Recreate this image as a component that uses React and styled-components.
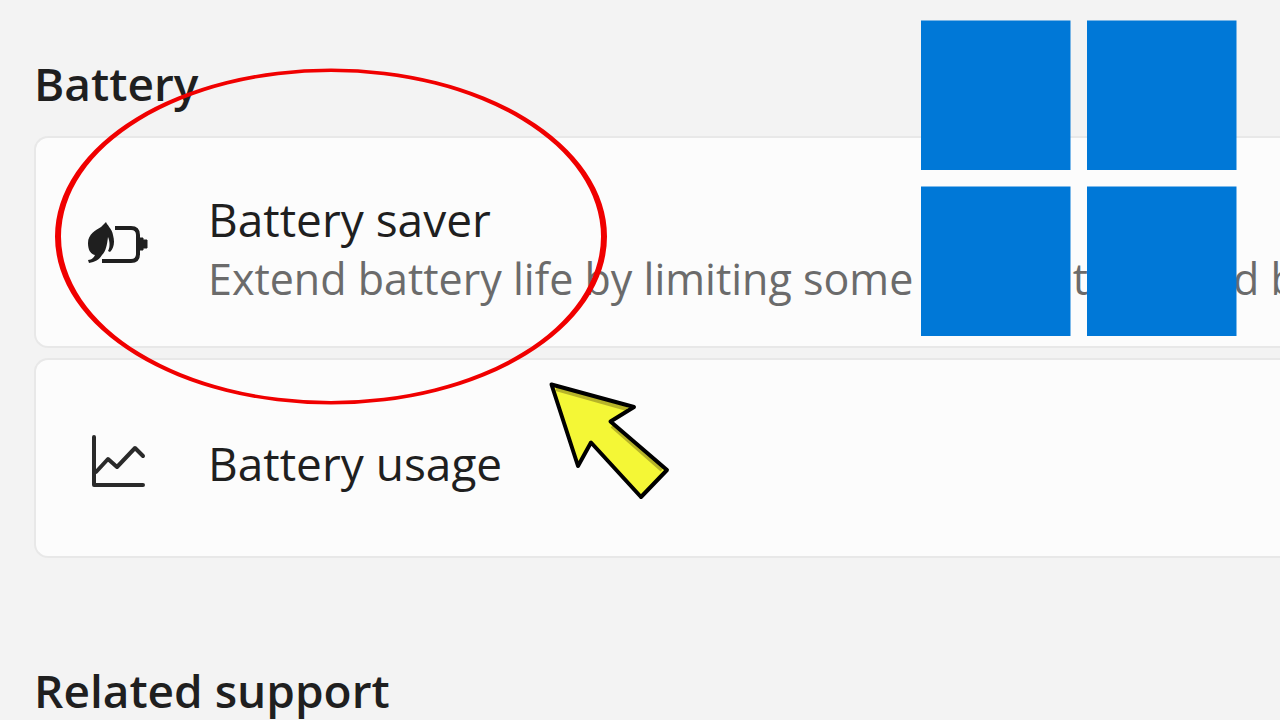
import React from 'react'
import styled, { createGlobalStyle } from 'styled-components'

const GlobalStyle = createGlobalStyle`
    * {
        box-sizing: border-box;
    }
    body {
        margin: 0;
        background: #f3f3f3;
        overflow: hidden;
        font-family: "Open Sans", "Noto Sans", sans-serif;
        color: #1f1f1f;
    }
`;
const Page = styled.main`
    position: relative;
    min-height: 100vh;
    padding: 51px 0 0 34px;
    overflow: hidden;
`;
const Heading = styled.h2`
    margin: 0;
    font-size: 46px;
    line-height: 64px;
    font-weight: 600;
`;
const CardList = styled.div`
    display: flex;
    flex-direction: column;
    gap: 10px;
    margin: 21px 0 100px;
`;
// Runs past the right side of the window, so only the left corners are round.
const Card = styled.button`
    display: flex;
    align-items: center;
    gap: 60px;
    width: 100%;
    padding: ${({ $tall }) => ($tall ? "50px 0 38px 52px" : "72px 0 62px 52px")};
    border: 2px solid #e8e8e8;
    border-right: none;
    border-radius: 14px 0 0 14px;
    background: #fcfcfc;
    color: inherit;
    font-family: inherit;
    text-align: left;
    white-space: nowrap;
    overflow: hidden;
`;
const CardIcon = styled.svg`
    flex: none;
    width: 60px;
    height: 60px;
`;
const CardText = styled.span`
    display: flex;
    flex-direction: column;
`;
const Title = styled.span`
    font-size: 46px;
    line-height: 62px;
`;
const Description = styled.span`
    font-size: 43px;
    line-height: 58px;
    color: #6b6b6b;
`;
const WindowsLogo = styled.svg`
    position: absolute;
    top: 20px;
    right: 43px;
    width: 317px;
    height: 317px;
`;
const Ring = styled.svg`
    position: absolute;
    top: 68px;
    left: 54px;
    width: 554px;
    height: 338px;
    pointer-events: none;
`;
const Pointer = styled.svg`
    position: absolute;
    top: 376px;
    left: 544px;
    width: 130px;
    height: 130px;
    pointer-events: none;
`;

const BatterySaverIcon = () => (
    <CardIcon viewBox="88 218 60 60" aria-hidden="true">
        <path
            d="M106 222 C107 225 112 229 113 235 C115 242 114 248 110 252 L108 251 C110 247 110 242 108 237 C107 245 106 251 102 255 C99 260 95 262 89 263 L88 260 C92 260 94 257 95 255 C90 254 88 249 88 243 C88 234 96 230 101 227 Z"
            fill="#1f1f1f"
        />
        <path d="M115 228 H131 Q138 228 138 235 V254 Q138 261 131 261 H102" fill="none" stroke="#1f1f1f" strokeWidth="4" />
        <path d="M139 238 H143 V240 H147 V248 H143 V250 H139 Z" fill="#1f1f1f" stroke="#1f1f1f" strokeWidth="1" strokeLinejoin="round" />
    </CardIcon>
)

const BatteryUsageIcon = () => (
    <CardIcon viewBox="88 433 60 60" aria-hidden="true">
        <path
            d="M94 437 V485 H143 M96 472 L108 459 L117 467 L135 448 L143 456"
            fill="none"
            stroke="#2a2a2a"
            strokeWidth="4"
            strokeLinecap="round"
            strokeLinejoin="round"
        />
    </CardIcon>
)

const App = () => {
  return (
    <>
        <GlobalStyle />
        <Page>
            <Heading>Battery</Heading>
            <CardList>
                <Card type="button" $tall>
                    <BatterySaverIcon />
                    <CardText>
                        <Title>Battery saver</Title>
                        <Description>Extend battery life by limiting some notifications and background activity</Description>
                    </CardText>
                </Card>
                <Card type="button">
                    <BatteryUsageIcon />
                    <CardText>
                        <Title>Battery usage</Title>
                    </CardText>
                </Card>
            </CardList>
            <Heading>Related support</Heading>

            <WindowsLogo viewBox="920 20 317 317" fill="#0078d7" aria-hidden="true">
                <rect x="921" y="20.5" width="149.5" height="149.5" />
                <rect x="1087" y="20.5" width="149.5" height="149.5" />
                <rect x="921" y="186.5" width="149.5" height="149.5" />
                <rect x="1087" y="186.5" width="149.5" height="149.5" />
            </WindowsLogo>
            {/* The ring is thicker at its sides than at its top and bottom. */}
            <Ring viewBox="54 68 554 338" aria-hidden="true">
                <path
                    fillRule="evenodd"
                    fill="#f00000"
                    d="M55 236.5 A276 168 0 0 1 607 236.5 A276 168 0 0 1 55 236.5 Z M61 236.5 A270 164.5 0 0 0 601 236.5 A270 164.5 0 0 0 61 236.5 Z"
                />
            </Ring>
            <Pointer viewBox="544 376 130 130" aria-hidden="true">
                <path d="M551.5 384.5 L634 407 L610.5 421.5 L667 470 L641 497 L591 442.5 L578 466 Z" fill="#f4f736" />
                <path d="M556 389 L627 409 M612 426 L662 470" fill="none" stroke="#a8a326" strokeWidth="4" opacity="0.8" />
                <path
                    d="M551.5 384.5 L634 407 L610.5 421.5 L667 470 L641 497 L591 442.5 L578 466 Z"
                    fill="none"
                    stroke="#000"
                    strokeWidth="4"
                    strokeLinejoin="round"
                />
            </Pointer>
        </Page>
    </>
  )
}

export default App
